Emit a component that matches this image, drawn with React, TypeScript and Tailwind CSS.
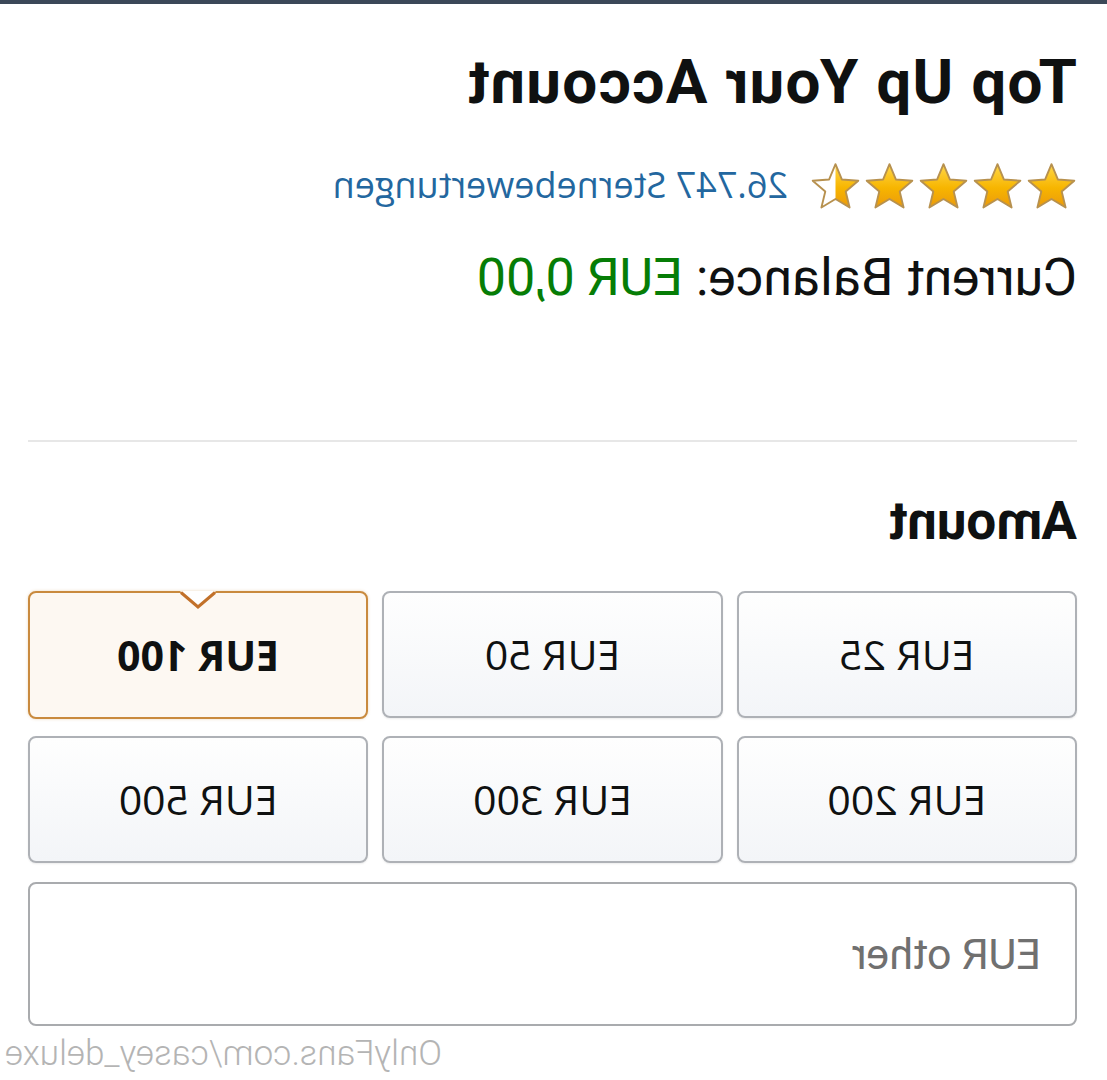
import { useId } from "react"

const amounts = [
  { label: "EUR 25", selected: false },
  { label: "EUR 50", selected: false },
  { label: "EUR 100", selected: true },
  { label: "EUR 200", selected: false },
  { label: "EUR 300", selected: false },
  { label: "EUR 500", selected: false },
]

const STAR =
  "M12 1.5 L15.05 8.85 L22.94 9.45 L16.9 14.6 L18.76 22.3 L12 18.2 L5.24 22.3 L7.1 14.6 L1.06 9.45 L8.95 8.85 Z"

function Star({ half = false }: { half?: boolean }) {
  const id = useId().replace(/:/g, "")
  return (
    <svg width="51" height="49" viewBox="0 0 24 23.5">
      <defs>
        <linearGradient id={`g${id}`} x1="0" y1="0" x2="0" y2="1">
          <stop offset="0" stopColor="#ffd84a" />
          <stop offset="0.55" stopColor="#f7b500" />
          <stop offset="1" stopColor="#eb9a0c" />
        </linearGradient>
        <clipPath id={`c${id}`}>
          <rect x="0" y="0" width="12" height="24" />
        </clipPath>
      </defs>
      <path d={STAR} fill={half ? "#ffffff" : `url(#g${id})`} />
      {half && <path d={STAR} fill={`url(#g${id})`} clipPath={`url(#c${id})`} />}
      <path d={STAR} fill="none" stroke="#b7914f" strokeWidth="0.9" strokeLinejoin="round" />
    </svg>
  )
}

export default function App() {
  return (
    <div className="w-[1107px] h-[1080px] overflow-hidden bg-white -scale-x-100 relative">
      <div className="h-[4px] bg-[#3b4858]" />
      <div className="pl-[30px] pr-[28px] flex flex-col">
        {/* Heading */}
        <h1 className="mt-[47px] text-[62px] leading-none font-bold text-[#0f1111] font-['Roboto',sans-serif] tracking-[1.3px]">
          Top Up Your Account
        </h1>

        {/* Rating */}
        <div className="mt-[48px] h-[48px] flex items-center">
          <div className="flex gap-[3px]">
            <Star />
            <Star />
            <Star />
            <Star />
            <Star half />
          </div>
          <span className="ml-[22px] text-[36px] leading-none text-[#23679f] font-['Open_Sans',sans-serif]">
            26.747 Sternebewertungen
          </span>
        </div>

        {/* Balance */}
        <div className="mt-[43px] text-[52px] leading-none text-[#0f1111] font-['Roboto',sans-serif]">
          Current Balance: <span className="text-[#067d06]">EUR 0,00</span>
        </div>

        <div className="mt-[136px] h-[2px] bg-[#e7e7e7]" />

        {/* Amount */}
        <h2 className="mt-[53px] text-[53px] leading-none font-bold text-[#0f1111] font-['Roboto',sans-serif]">
          Amount
        </h2>

        <div className="mt-[43px] grid grid-cols-3 gap-x-[14px] gap-y-[17px]">
          {amounts.map((a) => (
            <div
              key={a.label}
              className={
                a.selected
                  ? "relative h-[128px] rounded-[8px] border-2 border-[#c98a3e] bg-[#fdf8f2] flex items-center justify-center shadow-[0_0_3px_rgba(200,140,60,0.35)]"
                  : "relative h-[127px] rounded-[8px] border-2 border-[#aeb1b6] bg-linear-to-b from-[#fefefe] to-[#f3f5f8] flex items-center justify-center shadow-[0_1px_2px_rgba(0,0,0,0.08)]"
              }
            >
              {a.selected && (
                <svg
                  className="absolute top-[-2px] left-1/2 -translate-x-1/2"
                  width="36"
                  height="20"
                  viewBox="0 0 36 20"
                >
                  <polygon points="0,0 36,0 18,16" fill="#ffffff" />
                  <polyline
                    points="1,1.5 18,16 35,1.5"
                    fill="none"
                    stroke="#c2712a"
                    strokeWidth="3"
                    strokeLinejoin="miter"
                  />
                </svg>
              )}
              <span
                className={
                  a.selected
                    ? "text-[41px] leading-none font-bold text-[#0f1111] font-['Open_Sans',sans-serif]"
                    : "text-[41px] leading-none text-[#0f1111] font-['Open_Sans',sans-serif]"
                }
              >
                {a.label}
              </span>
            </div>
          ))}
        </div>

        {/* Other amount */}
        <div className="mt-[19px] h-[144px] rounded-[8px] border-2 border-[#a9abae] bg-white flex items-center pl-[34px]">
          <span className="text-[43px] leading-none text-[#707070] font-['Roboto',sans-serif]">
            EUR other
          </span>
        </div>
      </div>

      {/* Watermark */}
      <div className="absolute right-[5px] top-[1036px] text-[35px] leading-none font-light text-[#b4b4b4] font-['Roboto',sans-serif]">
        OnlyFans.com/casey_deluxe
      </div>
    </div>
  )
}
